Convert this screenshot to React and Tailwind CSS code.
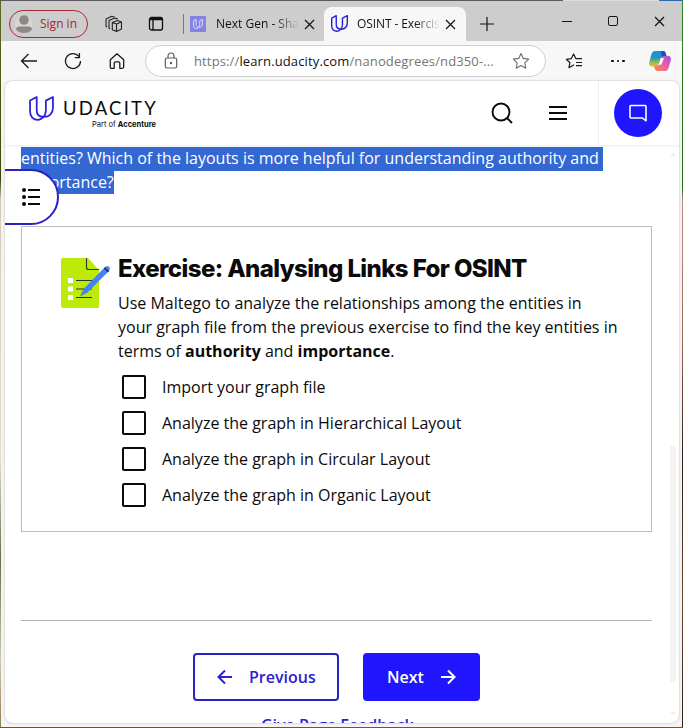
import React from 'react';

function UMark({ className, stroke = '#2b22d8', width = 2 }) {
  return (
    <svg viewBox="0 0 24 24" fill="none" stroke={stroke} strokeWidth={width} strokeLinejoin="round" className={className}>
      <path d="M1 4.400 7.400 1v12.800c0 3.400 2.300 5.900 6.400 6.200-1.500 2-3 2.900-5.200 2.900C4 22.900 1 19.700 1 14.700z" />
      <path d="M16.200 4.400 23 1v10.500c0 5-3.700 9-9.200 8.500 1.700-1.500 2.400-3.600 2.400-6.500z" />
    </svg>
  );
}

function CloseIcon({ className, size = 11 }) {
  return (
    <svg width={size} height={size} viewBox="0 0 11 11" stroke="#161616" strokeWidth="1.300" className={className}>
      <path d="M1 1l9 9M10 1l-9 9" />
    </svg>
  );
}

function TabStrip() {
  return (
    <div className="flex h-10 shrink-0 items-start bg-[#cdcdcd] text-[12px] text-[#111]">
      <div className="ml-2 mt-[9px] flex h-7 w-[79px] shrink-0 items-center rounded-full border border-[#a82a35] pl-[5px] text-[#a4262c]">
        <svg width="18" height="18" viewBox="0 0 18 18" className="shrink-0">
          <circle cx="9" cy="9" r="9" fill="#dad6d4" />
          <circle cx="9" cy="5" r="4.800" fill="#8d8987" />
          <path d="M1 14.500c0-2 1.500-3 3-3h10c1.500 0 3 1 3 3-2 2.500-5 3.500-8 3.500s-6-1-8-3.500z" fill="#8d8987" />
        </svg>
        <span className="ml-[7px] whitespace-nowrap">Sign in</span>
      </div>
      <svg width="18" height="18" viewBox="0 0 18 18" fill="none" stroke="#222" strokeWidth="1.100" strokeLinejoin="round" className="ml-[17px] mt-[14px] shrink-0">
        <path d="m7.300 7.400 5.200-1.900 4 1.500v7l-5 2.600-4.200-1.800zM7.300 7.400l4.200 1.700L16.500 7M11.500 9.100v7.500" />
        <path d="M5.200 13.800 4 13.200V5.500L9.700 3l3 .9M2.200 12l-1.200-.7V4l5.800-2.700 2.600.7" />
      </svg>
      <svg width="16" height="16" viewBox="0 0 16 16" fill="none" stroke="#111" strokeWidth="1.300" className="ml-[25px] mt-[15px] shrink-0">
        <rect x="1.500" y="1.500" width="13" height="12.500" rx="2" />
        <path d="M1.500 3.500h13M5 4v10" />
        <path d="M2 2.700h12" strokeWidth="2.400" />
      </svg>
      <div className="ml-[19px] mt-[13px] h-5 w-px shrink-0 bg-[#777]" />
      <div className="ml-[6px] mt-[15px] flex size-4 shrink-0 items-center justify-center bg-[#8583e3]">
        <UMark className="size-[10px]" stroke="#dfdcff" width={2.4} />
      </div>
      <span className="ml-[10px] mt-[14px] w-[82px] shrink-0 whitespace-nowrap leading-[18px] [mask-image:linear-gradient(to_right,black_70%,transparent_102%)]">Next Gen - Sha</span>
      <CloseIcon className="ml-[6px] mt-[18px] shrink-0" />
      <div className="ml-[9px] mt-[6px] flex h-[34px] w-[142px] shrink-0 items-start rounded-t-[8px] bg-[#f7f7f7]">
        <UMark className="ml-[7px] mt-[8px] size-[17px] shrink-0" width={2} />
        <span className="ml-[9px] mt-[8px] w-[82px] shrink-0 whitespace-nowrap leading-[18px] tracking-[-0.1px] [mask-image:linear-gradient(to_right,black_70%,transparent_102%)]">OSINT - Exercis</span>
        <CloseIcon className="ml-[6px] mt-[12px] shrink-0" />
      </div>
      <svg width="14" height="14" viewBox="0 0 14 14" stroke="#151515" strokeWidth="1.200" className="ml-[14px] mt-[16px] shrink-0">
        <path d="M0 7h14M7 0v14" />
      </svg>
      <div className="ml-[68px] mt-[20px] h-px w-[10px] shrink-0 bg-[#151515]" />
      <div className="ml-[36px] mt-[15px] size-[10px] shrink-0 rounded-[2px] border border-[#151515]" />
      <CloseIcon className="ml-[36px] mt-[15px] shrink-0" />
    </div>
  );
}

function Toolbar() {
  return (
    <div className="flex h-10 shrink-0 items-center bg-[#f7f7f7]">
      <svg width="18" height="16" viewBox="0 0 18 16" fill="none" stroke="#1b1b1b" strokeWidth="1.300" className="ml-[19px] shrink-0">
        <path d="M17 8H1.500M8.500 1 1.500 8l7 7" />
      </svg>
      <svg width="18" height="18" viewBox="0 0 18 18" fill="none" stroke="#1b1b1b" strokeWidth="1.300" className="ml-[26px] shrink-0">
        <path d="M16.500 9A7.500 7.500 0 1 1 14.800 4.300M15.400 1v4.600h-4.600" />
      </svg>
      <svg width="16" height="18" viewBox="0 0 16 18" fill="none" stroke="#1b1b1b" strokeWidth="1.300" strokeLinejoin="round" className="ml-[27px] shrink-0">
        <path d="M1.300 7.800 8 1.700l6.700 6.100v7c0 1-.5 1.500-1.500 1.500h-2.400v-5c0-1-.5-1.500-1.300-1.500h-3c-.8 0-1.300.5-1.300 1.500v5H2.800c-1 0-1.500-.5-1.500-1.500z" />
      </svg>
      <div className="ml-[20px] flex h-8 w-[401px] shrink-0 items-center rounded-full border border-[#cfcfcf] bg-white">
        <svg width="14" height="18" viewBox="0 0 14 18" fill="none" stroke="#5e5e5e" strokeWidth="1.200" className="ml-[18px] shrink-0">
          <rect x="1.300" y="6" width="11.400" height="10" rx="1.800" />
          <path d="M4 6V4a3 3 0 0 1 6 0v2" />
          <circle cx="7" cy="11" r=".6" fill="#5e5e5e" />
        </svg>
        <div className="ml-[16px] w-[318px] shrink-0 whitespace-nowrap text-[13px] leading-5 tracking-[0.010em] text-[#767676]">
          https://<span className="text-[#111]">learn.udacity.com</span>/nanodegrees/nd350-...
        </div>
        <svg width="18" height="18" viewBox="0 0 18 18" fill="none" stroke="#6d6d6d" strokeWidth="1.100" strokeLinejoin="round" className="shrink-0">
          <path d="m9 1.500 2.300 4.900 5.400.7-3.900 3.700.9 5.400L9 13.600l-4.700 2.600.9-5.400-3.900-3.700 5.400-.7z" />
        </svg>
      </div>
      <svg width="18" height="18" viewBox="0 0 18 18" fill="none" stroke="#1b1b1b" strokeWidth="1.200" strokeLinejoin="round" className="ml-[19px] shrink-0">
        <path d="M9 12.800 4 15.700l.9-5L1.300 7.300l5-.7L8.600 2l2.200 4.600H17M11 10.500h6M11 13.700h6" />
      </svg>
      <div className="ml-[28px] flex gap-[3px]">
        <i className="size-[2.500px] rounded-full bg-black" />
        <i className="size-[2.500px] rounded-full bg-black" />
        <i className="size-[2.500px] rounded-full bg-black" />
      </div>
      <svg width="24" height="22" viewBox="0 0 24 22" className="ml-[23px] shrink-0">
        <defs>
          <linearGradient id="cpA" x1="0" y1="0" x2="0" y2="1">
            <stop offset="0" stopColor="#1b8fe0" />
            <stop offset=".45" stopColor="#2596b8" />
            <stop offset=".72" stopColor="#8fbb4e" />
            <stop offset="1" stopColor="#f2c02d" />
          </linearGradient>
          <linearGradient id="cpB" x1="1" y1="0" x2="0" y2="1">
            <stop offset="0" stopColor="#a54de3" />
            <stop offset=".5" stopColor="#ea61a5" />
            <stop offset="1" stopColor="#fb8a4b" />
          </linearGradient>
        </defs>
        <path d="M7 1h8c2 0 2.500 1.500 3 3.500l.7 2.500h-3.200c-2 0-2.700.8-3.200 2.500l-1.500 4.500c-.5 1.500-1 2.500-3 2.500H4c-3 0-3.200-2.500-2.600-5L3.500 4C4.200 2 5 1 7 1z" fill="url(#cpA)" />
        <path d="M17 21H9.500C7.500 21 7 19.500 6.500 18L6 16h2.300c2 0 2.500-1 3-2.500L13 8.500c.5-1.500 1.300-2.500 3-2.500h4c3 0 3.300 2.500 2.600 5l-2.100 7c-.6 2-1.500 3-3.500 3z" fill="url(#cpB)" />
        <path d="M13 1h2c2 0 2.500 1.500 3 3.500l.6 1.500H16c-1 0-1.800.4-2.300 1z" fill="#1654b8" />
        <path d="m12.800 8.300 3.200-.3-2.700 6.500-4 .8c1.200-.2 1.600-.8 2-1.800z" fill="#fff" />
      </svg>
    </div>
  );
}

function SiteHeader() {
  return (
    <header className="flex h-[66px] shrink-0 items-stretch border-b-2 border-[#f5f5f5] bg-white">
      <UMark className="ml-[24px] mt-[15px] size-[25px] shrink-0" width={1.7} />
      <div className="ml-[9px] mt-[16px] w-[97px] shrink-0 text-right text-[#0b0b0b]">
        <div className="whitespace-nowrap text-left font-['Lato'] text-[18.500px] leading-[22px] tracking-[2.200px]">UDACITY</div>
        <div className="mr-[4px] mt-[1px] whitespace-nowrap font-['Inter'] text-[7.500px] leading-[9px]">Part of <b>Accenture</b></div>
      </div>
      <svg width="22" height="22" viewBox="0 0 22 22" fill="none" stroke="#0b0b0b" strokeWidth="1.900" className="ml-[331px] mt-[21px] shrink-0">
        <circle cx="10" cy="10" r="8.500" />
        <path d="m16 16 5 5" />
      </svg>
      <div className="ml-[36px] mt-[25px] flex w-[18px] shrink-0 flex-col gap-[4px]">
        <i className="h-[2px] bg-[#0b0b0b]" />
        <i className="h-[2px] bg-[#0b0b0b]" />
        <i className="h-[2px] bg-[#0b0b0b]" />
      </div>
      <div className="ml-[31px] flex-1 border-l border-[#f0f0f0] pl-[15px] pt-[8px]">
        <div className="flex size-12 items-center justify-center rounded-full bg-[#2015ff]">
          <svg width="20" height="20" viewBox="0 0 20 20" fill="none" stroke="#fff" strokeWidth="1.600" strokeLinejoin="round">
            <path d="M2 3.500c0-.6.400-1 1-1h14c.6 0 1 .4 1 1v14.300L14.500 15H3c-.6 0-1-.4-1-1z" />
          </svg>
        </div>
      </div>
    </header>
  );
}

function NoteIcon() {
  return (
    <svg width="50" height="52" viewBox="0 0 50 52" className="shrink-0">
      <path d="M2.500 1H27l11 12v36.500c0 1-.6 1.500-1.500 1.500h-34C1.500 51 0 50.400 0 49V2.500C0 1.500 1 1 2.500 1z" fill="#bdea09" />
      <path d="M25.500 1v9.500c0 1.300.6 2 2 2H38M15 23.500h16M15 32h16M15 40.500h16" fill="none" stroke="#2b3a1c" strokeWidth="1.100" />
      <path d="M7 21h5v5H7zM7 29.500h5v5H7zM7 38h5v5H7z" fill="#fff" />
      <path d="M19 39.500 22.500 32 43.500 10.500c1.500-1.700 3.200-2 4.500-.7s1.200 3-.3 4.500L26.500 35.500z" fill="#4582f2" />
      <path d="m43.300 10.800 4.300 4" stroke="#1d2c55" strokeWidth="1.600" />
    </svg>
  );
}

const steps = [
  'Import your graph file',
  'Analyze the graph in Hierarchical Layout',
  'Analyze the graph in Circular Layout',
  'Analyze the graph in Organic Layout',
];

function ExerciseCard() {
  return (
    <section className="ml-4 mt-[32px] flex h-[306px] w-[631px] shrink-0 border border-[#bdbdbd] pl-[39px] pt-[30px]">
      <NoteIcon />
      <div className="ml-[7px] text-[#0b0b0b]">
        <h2 className="-mt-[1px] whitespace-nowrap font-['Inter'] text-[24px] font-extrabold leading-[26px] tracking-[-0.6px]">Exercise: Analysing Links For OSINT</h2>
        <p className="mt-[9px] whitespace-nowrap text-[16px] leading-6">
          Use Maltego to analyze the relationships among the entities in<br />
          your graph file from the previous exercise to find the key entities in<br />
          terms of <b>authority</b> and <b>importance</b>.
        </p>
        <ul className="ml-1 mt-[12px] flex flex-col gap-3">
          {steps.map((s) => (
            <li key={s} className="flex h-6 items-center gap-4 whitespace-nowrap">
              <span className="size-6 rounded-[2px] border-2 border-[#0b0b0b]" />
              <span>{s}</span>
            </li>
          ))}
        </ul>
      </div>
    </section>
  );
}

function Arrow({ flip = false }) {
  return (
    <svg width="16" height="16" viewBox="0 0 16 16" fill="none" stroke="currentColor" strokeWidth="2" className={flip ? 'rotate-180' : ''}>
      <path d="M1 8h13M8 1.500 14.500 8 8 14.500" />
    </svg>
  );
}

export default function App() {
  return (
    <div className="flex h-[728px] w-[683px] flex-col overflow-hidden bg-[linear-gradient(to_bottom,#5f6a20_0,#3a450d_180px,#d5c9b8_200px,#e6ddcb_460px,#6b6a45_560px,#d0c9ae_660px,#8d7d55_728px)] font-['Open_Sans','Noto_Sans',sans-serif]">
      <div className="flex h-px shrink-0">
        <div className="w-[563px] bg-[#5d5860]" />
        <div className="w-[96px] bg-[#dcdcdc]" />
        <div className="flex-1 bg-[#2a6ab0]" />
      </div>
      <div className="flex h-[727px] shrink-0 border-b border-[#6b5638] pl-px">
        <div className="flex w-[681px] shrink-0 flex-col bg-[#f4f4f3]">
          <TabStrip />
          <Toolbar />
          <main className="relative ml-[4px] flex h-[642px] w-[674px] flex-col overflow-hidden rounded-[8px] bg-white shadow-[0_0_2px_#aaa]">
            <SiteHeader />
            <div className="ml-4 whitespace-nowrap text-[16px] leading-[23.500px] text-white">
              <div className="w-[582px] bg-[#3367d1]">entities? Which of the layouts is more helpful for understanding authority and</div>
              <div className="w-[93px] bg-[#3367d1]">importance?</div>
            </div>
            <ExerciseCard />
            <hr className="ml-4 mt-[88px] w-[631px] border-[#b3b3b3]" />
            <div className="ml-[188px] mt-[32px] flex shrink-0 gap-6 text-[16px] font-semibold">
              <div className="flex h-12 w-[146px] items-center rounded-[4px] border-2 border-[#2b22c4] pl-[22px] text-[#2b22d0]">
                <Arrow flip />
                <span className="ml-4">Previous</span>
              </div>
              <div className="flex h-12 w-[117px] items-center rounded-[4px] bg-[#2015ff] pl-[24px] text-white">
                <span>Next</span>
                <span className="ml-4"><Arrow /></span>
              </div>
            </div>
            <div className="ml-[256px] mt-[12px] shrink-0 whitespace-nowrap text-[16px] font-semibold leading-6 text-[#2b22d0]">Give Page Feedback</div>
            <button className="absolute left-[-2px] top-[88px] flex h-[56px] w-[56px] items-center rounded-r-full border-2 border-[#2b22c4] bg-white pl-[17px]">
              <svg width="18" height="18" viewBox="0 0 18 18" fill="#0b0b0b">
                <circle cx="2" cy="2" r="2" /><circle cx="2" cy="9" r="2" /><circle cx="2" cy="16" r="2" />
                <path d="M6 1h12v2H6zM6 8h12v2H6zM6 15h12v2H6z" />
              </svg>
            </button>
            <div className="absolute right-[3px] top-[364px] h-[238px] w-[6px] rounded-full bg-[#f4f4f4]" />
            <svg width="6" height="3" viewBox="0 0 6 3" className="absolute right-[3px] top-[72px]" fill="#ececec"><path d="M0 3 3 0l3 3z" /></svg>
            <svg width="6" height="3" viewBox="0 0 6 3" className="absolute bottom-[8px] right-[3px]" fill="#efefef"><path d="M0 0h6L3 3z" /></svg>
          </main>
        </div>
        <div className="w-px bg-[linear-gradient(to_bottom,#2f8a1f_0,#246b14_185px,#b98a86_200px,#a56c5e_330px,#2a1a14_460px,#6a4630_600px,#2a1d18_728px)]" />
      </div>
    </div>
  );
}
